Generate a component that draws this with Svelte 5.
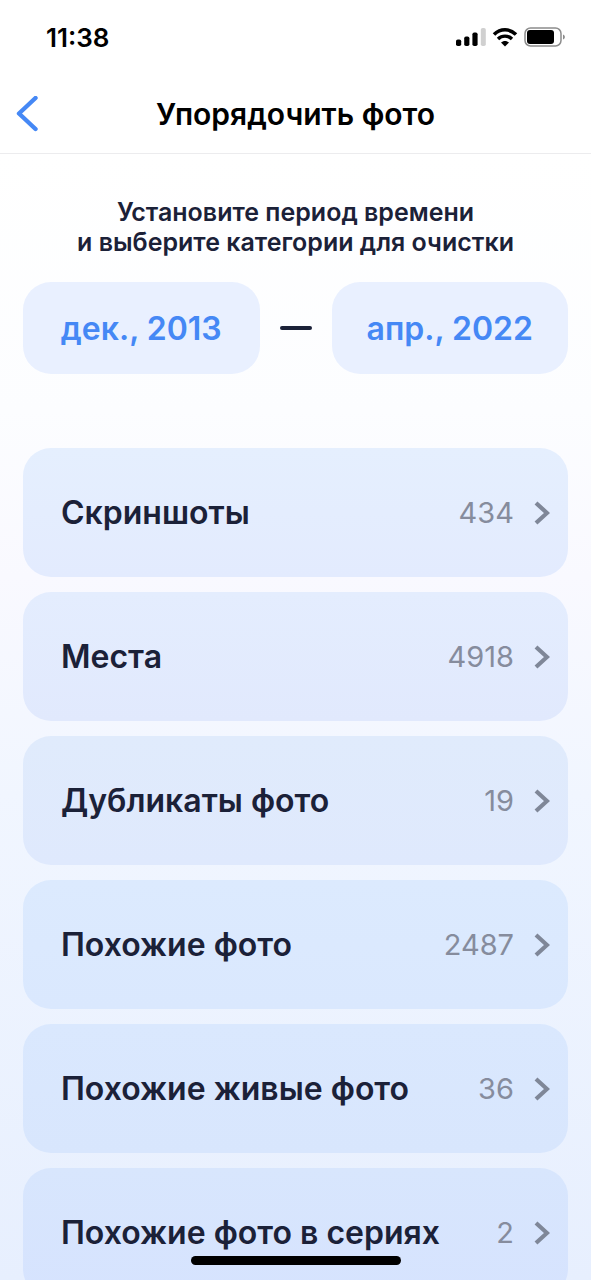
<script>
    let period = $state({ from: "дек., 2013", to: "апр., 2022" });

    const categories = [
        { name: "Скриншоты", count: 434 },
        { name: "Места", count: 4918 },
        { name: "Дубликаты фото", count: 19 },
        { name: "Похожие фото", count: 2487 },
        { name: "Похожие живые фото", count: 36 },
        { name: "Похожие фото в сериях", count: 2 },
    ];
</script>

<div class="screen">
    <div class="status-bar">
        <time>11:38</time>
        <div class="status-icons">
            <svg width="30" height="20" viewBox="0 0 30 20">
                <rect x="0" y="12.5" width="5.2" height="6.5" rx="1.8" />
                <rect x="8.2" y="9.5" width="5.2" height="9.5" rx="1.8" />
                <rect x="16.4" y="5.5" width="5.2" height="13.5" rx="1.8" />
                <rect x="24.8" y="1" width="5" height="18" rx="1.8" fill="#d0d0d0" />
            </svg>
            <svg width="26" height="20" viewBox="0 0 26 20">
                <path d="M2 7.5C8.5 1.2 17.5 1.2 24 7.5" fill="none" stroke="#000" stroke-width="3.6" />
                <path d="M6 12C10 8.2 16 8.2 20 12" fill="none" stroke="#000" stroke-width="3.4" />
                <path d="M9 15.5C11.3 13.4 14.7 13.4 17 15.5L13 19.5Z" />
            </svg>
            <svg width="42" height="20" viewBox="0 0 42 20">
                <rect x="1" y="1" width="36" height="18" rx="5.5" fill="none" stroke="#8c8c8c" stroke-width="1.5" />
                <rect x="3" y="3" width="27" height="14" rx="3" />
                <path d="M39 7.5C41.5 8.5 41.5 11.5 39 12.5Z" fill="#8c8c8c" />
            </svg>
        </div>
    </div>

    <header>
        <button class="back" aria-label="Назад">
            <svg width="22" height="36" viewBox="0 0 22 36">
                <path
                    d="M19.5 2L3 17.500L19.5 33"
                    fill="none"
                    stroke="#4588f5"
                    stroke-width="4.4"
                    stroke-linecap="round"
                    stroke-linejoin="round"
                />
            </svg>
        </button>
        <h1>Упорядочить фото</h1>
    </header>

    <main>
        <p>Установите период времени<br />и выберите категории для очистки</p>

        <div class="period">
            <button>{period.from}</button>
            <span class="dash"></span>
            <button>{period.to}</button>
        </div>

        <ul>
            {#each categories as category}
                <li>
                    <button class="category">
                        <span class="name">{category.name}</span>
                        <span class="count">{category.count}</span>
                        <svg width="16" height="24" viewBox="0 0 16 24">
                            <path d="M2 2L13 12L2 22" fill="none" stroke="#7f8798" stroke-width="4.2" />
                        </svg>
                    </button>
                </li>
            {/each}
        </ul>
    </main>

    <div class="home-indicator"></div>
</div>

<style>
    :global(body) {
        margin: 0;
    }

    .screen {
        display: flex;
        flex-direction: column;
        height: 100vh;
        overflow: hidden;
        font-family: Inter, "Liberation Sans", sans-serif;
        color: #1b2138;
        background: linear-gradient(#fff 12%, #fcfdff 32%, #f9f9ff 45%, #f1f6ff 62%, #e7effe);
    }

    button {
        margin: 0;
        padding: 0;
        border: none;
        background: none;
        font: inherit;
        color: inherit;
        cursor: pointer;
    }

    svg {
        display: block;
        flex: none;
    }

    .status-bar {
        display: flex;
        flex: none;
        align-items: center;
        justify-content: space-between;
        height: 74px;
        padding: 0 25px 0 46px;
        background: #fff;
        color: #000;
    }

    time {
        font-size: 26px;
        font-weight: 600;
    }

    .status-icons {
        display: flex;
        gap: 6px;
    }

    header {
        display: grid;
        flex: none;
        grid-template-columns: 60px 1fr 60px;
        align-items: center;
        height: 79px;
        border-bottom: 1px solid #ececee;
        background: #fff;
        color: #000;
    }

    .back {
        padding: 8px 16px;
    }

    h1 {
        margin: 0;
        font-size: 30px;
        font-weight: 600;
        text-align: center;
    }

    main {
        flex: 1;
        min-height: 0;
        padding: 43px 23px 0;
        overflow: hidden;
    }

    p {
        margin: 0;
        font-size: 25px;
        font-weight: 600;
        line-height: 30px;
        text-align: center;
    }

    .period {
        display: flex;
        align-items: center;
        gap: 20px;
        margin-top: 25px;
    }

    .period button {
        flex: 1;
        height: 92px;
        border-radius: 28px;
        background: #e9f0ff;
        color: #4588f5;
        font-size: 32px;
        font-weight: 600;
    }

    .dash {
        width: 32px;
        height: 4px;
        border-radius: 2px;
        background: #1b2138;
    }

    ul {
        display: flex;
        flex-direction: column;
        gap: 15px;
        margin: 74px 0 0;
        padding: 0;
        list-style: none;
    }

    .category {
        display: flex;
        align-items: center;
        width: 100%;
        height: 129px;
        padding: 0 18px 0 38px;
        border-radius: 28px;
        background: linear-gradient(#e5effe, #e3ebfe);
        text-align: left;
    }

    li:nth-child(2) .category {
        background: linear-gradient(#e4edfe, #e1e9fd);
    }

    li:nth-child(3) .category {
        background: linear-gradient(#e0ebfc, #dfe9fd);
    }

    li:nth-child(4) .category {
        background: linear-gradient(#dceafe, #dae8fe);
    }

    li:nth-child(5) .category {
        background: linear-gradient(#dae8fe, #d8e6fd);
    }

    li:nth-child(6) .category {
        background: linear-gradient(#d8e6fd, #d6e3fe);
    }

    .name {
        flex: 1;
        font-size: 32px;
        font-weight: 600;
    }

    .count {
        margin-right: 20px;
        font-size: 29px;
        color: #868c9d;
    }

    .home-indicator {
        position: fixed;
        bottom: 15px;
        left: 50%;
        width: 210px;
        height: 9px;
        border-radius: 5px;
        background: #000;
        transform: translateX(-50%);
    }
</style>
